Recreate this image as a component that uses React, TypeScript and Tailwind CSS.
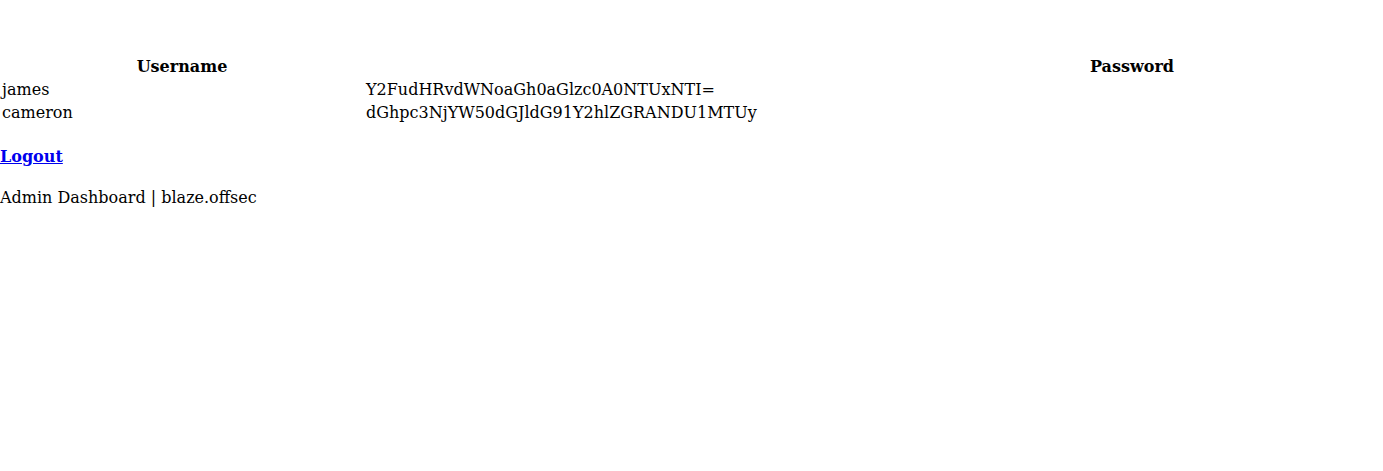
const users = [
  { name: "james", password: "Y2FudHRvdWNoaGh0aGlzc0A0NTUxNTI=" },
  { name: "cameron", password: "dGhpc3NjYW50dGJldG91Y2hlZGRANDU1MTUy" },
];

export default function App() {
  return (
    <div className="min-h-[471px] bg-white text-black text-[16px] leading-[19px] font-['DejaVu_Serif',serif]">
      {/* Users table */}
      <div className="pt-[57px] grid grid-cols-[364px_517px_1fr] gap-y-[4px]">
        <div className="text-center font-bold">Username</div>
        <div />
        <div className="text-center font-bold">Password</div>
        {users.map((u) => (
          <div key={u.name} className="contents">
            <div className="pl-[2px]">{u.name}</div>
            <div className="pl-[2px]">{u.password}</div>
            <div />
          </div>
        ))}
      </div>

      <p className="mt-[25px]">
        <a href="#" className="font-bold text-[#0000ee] underline">
          Logout
        </a>
      </p>

      <p className="mt-[22px]">Admin Dashboard | blaze.offsec</p>
    </div>
  );
}
